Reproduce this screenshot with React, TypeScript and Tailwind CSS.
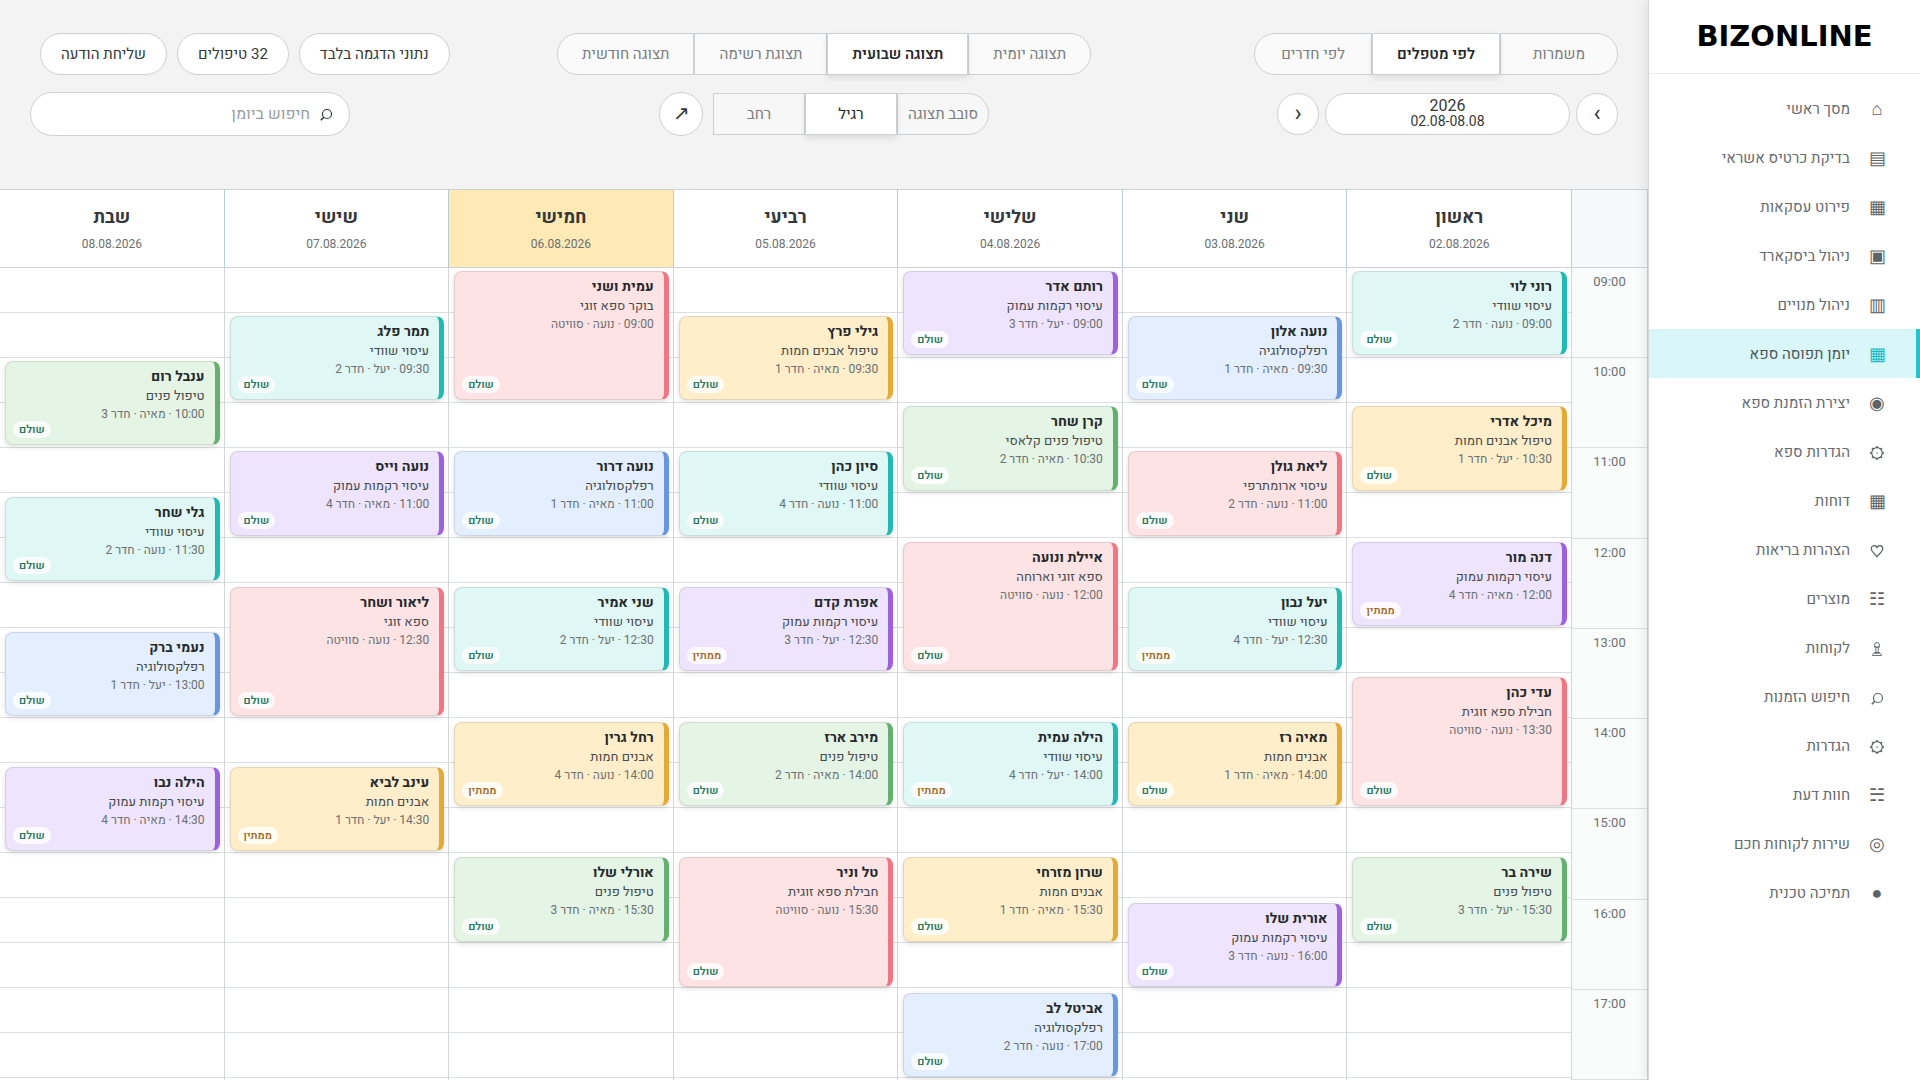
import { useState } from "react";
import clsx from "clsx";

type Tone = "teal" | "yellow" | "purple" | "red" | "blue" | "green";

type Booking = {
  time: string;
  slots: number;
  name: string;
  service: string;
  where: string;
  tone: Tone;
  waiting?: boolean;
};

type Day = { name: string; date: string; today?: boolean; bookings: Booking[] };

const tones: Record<Tone, string> = {
  teal: "bg-[#dff7f5] border-s-[#24b8b3]",
  yellow: "bg-[#ffeec9] border-s-[#e2aa36]",
  purple: "bg-[#efe4fd] border-s-[#9c62dc]",
  red: "bg-[#fee3e4] border-s-[#ed7782]",
  blue: "bg-[#e3efff] border-s-[#6897dc]",
  green: "bg-[#e4f5e6] border-s-[#65b070]",
};

const GearIcon = () => (
  <svg viewBox="0 0 16 16" className="size-4" fill="none" stroke="currentColor">
    <circle cx="8" cy="8" r="5.3" strokeWidth="1.2" />
    <circle cx="8" cy="8" r="0.8" fill="currentColor" stroke="none" />
    <path
      strokeWidth="1.6"
      d="M8 2.7V.9M8 13.3v1.8M2.7 8H.9M13.3 8h1.8M4.2 4.2 3 3M11.8 11.800l1.200 1.200M4.200 11.800 3 13M11.800 4.200 13 3"
    />
  </svg>
);

const HeartIcon = () => (
  <svg viewBox="0 0 16 16" className="size-4" fill="none" stroke="currentColor" strokeWidth="1.2">
    <path d="M8 13.8C6.800 11.300 2.300 9.100 2.300 5.700a2.850 2.850 0 0 1 5.700-.6 2.850 2.850 0 0 1 5.700.6c0 3.400-4.500 5.600-5.700 8.100Z" />
  </svg>
);

const PawnIcon = () => (
  <svg viewBox="0 0 16 16" className="size-4" fill="none" stroke="currentColor" strokeWidth="0.9">
    <circle cx="8" cy="4" r="2.5" />
    <path d="M5 6h6M6.800 6.500v5M9.200 6.500v5M5.200 11.500h5.600M3.500 14.500c0-1.500.6-2 1.700-2.200h5.600c1.100.2 1.700.7 1.700 2.200Z" />
  </svg>
);

const SearchIcon = () => (
  <svg viewBox="0 0 16 16" className="size-4" fill="none" stroke="currentColor">
    <circle cx="9" cy="8" r="4.5" strokeWidth="1.2" />
    <path d="m5.800 11.200-3 3" strokeWidth="1.600" />
  </svg>
);

const navItems = [
  { icon: "⌂", label: "מסך ראשי" },
  { icon: "▤", label: "בדיקת כרטיס אשראי" },
  { icon: "▦", label: "פירוט עסקאות" },
  { icon: "▣", label: "ניהול ביסקארד" },
  { icon: "▥", label: "ניהול מנויים" },
  { icon: "▦", label: "יומן תפוסה ספא", active: true },
  { icon: "◉", label: "יצירת הזמנת ספא" },
  { icon: <GearIcon />, label: "הגדרות ספא" },
  { icon: "▦", label: "דוחות" },
  { icon: <HeartIcon />, label: "הצהרות בריאות" },
  { icon: "☷", label: "מוצרים" },
  { icon: <PawnIcon />, label: "לקוחות" },
  { icon: <SearchIcon />, label: "חיפוש הזמנות" },
  { icon: <GearIcon />, label: "הגדרות" },
  { icon: "☵", label: "חוות דעת" },
  { icon: "◎", label: "שירות לקוחות חכם" },
  { icon: "●", label: "תמיכה טכנית" },
];

const days: Day[] = [
  {
    name: "ראשון",
    date: "02.08.2026",
    bookings: [
      { time: "09:00", slots: 2, name: "רוני לוי", service: "עיסוי שוודי", where: "נועה · חדר 2", tone: "teal" },
      { time: "10:30", slots: 2, name: "מיכל אדרי", service: "טיפול אבנים חמות", where: "יעל · חדר 1", tone: "yellow" },
      { time: "12:00", slots: 2, name: "דנה מור", service: "עיסוי רקמות עמוק", where: "מאיה · חדר 4", tone: "purple", waiting: true },
      { time: "13:30", slots: 3, name: "עדי כהן", service: "חבילת ספא זוגית", where: "נועה · סוויטה", tone: "red" },
      { time: "15:30", slots: 2, name: "שירה בר", service: "טיפול פנים", where: "יעל · חדר 3", tone: "green" },
    ],
  },
  {
    name: "שני",
    date: "03.08.2026",
    bookings: [
      { time: "09:30", slots: 2, name: "נועה אלון", service: "רפלקסולוגיה", where: "מאיה · חדר 1", tone: "blue" },
      { time: "11:00", slots: 2, name: "ליאת גולן", service: "עיסוי ארומתרפי", where: "נועה · חדר 2", tone: "red" },
      { time: "12:30", slots: 2, name: "יעל נבון", service: "עיסוי שוודי", where: "יעל · חדר 4", tone: "teal", waiting: true },
      { time: "14:00", slots: 2, name: "מאיה רז", service: "אבנים חמות", where: "מאיה · חדר 1", tone: "yellow" },
      { time: "16:00", slots: 2, name: "אורית שלו", service: "עיסוי רקמות עמוק", where: "נועה · חדר 3", tone: "purple" },
    ],
  },
  {
    name: "שלישי",
    date: "04.08.2026",
    bookings: [
      { time: "09:00", slots: 2, name: "רותם אדר", service: "עיסוי רקמות עמוק", where: "יעל · חדר 3", tone: "purple" },
      { time: "10:30", slots: 2, name: "קרן שחר", service: "טיפול פנים קלאסי", where: "מאיה · חדר 2", tone: "green" },
      { time: "12:00", slots: 3, name: "איילת ונועה", service: "ספא זוגי וארוחה", where: "נועה · סוויטה", tone: "red" },
      { time: "14:00", slots: 2, name: "הילה עמית", service: "עיסוי שוודי", where: "יעל · חדר 4", tone: "teal", waiting: true },
      { time: "15:30", slots: 2, name: "שרון מזרחי", service: "אבנים חמות", where: "מאיה · חדר 1", tone: "yellow" },
      { time: "17:00", slots: 2, name: "אביטל לב", service: "רפלקסולוגיה", where: "נועה · חדר 2", tone: "blue" },
    ],
  },
  {
    name: "רביעי",
    date: "05.08.2026",
    bookings: [
      { time: "09:30", slots: 2, name: "גילי פרץ", service: "טיפול אבנים חמות", where: "מאיה · חדר 1", tone: "yellow" },
      { time: "11:00", slots: 2, name: "סיון כהן", service: "עיסוי שוודי", where: "נועה · חדר 4", tone: "teal" },
      { time: "12:30", slots: 2, name: "אפרת קדם", service: "עיסוי רקמות עמוק", where: "יעל · חדר 3", tone: "purple", waiting: true },
      { time: "14:00", slots: 2, name: "מירב ארז", service: "טיפול פנים", where: "מאיה · חדר 2", tone: "green" },
      { time: "15:30", slots: 3, name: "טל וניר", service: "חבילת ספא זוגית", where: "נועה · סוויטה", tone: "red" },
    ],
  },
  {
    name: "חמישי",
    date: "06.08.2026",
    today: true,
    bookings: [
      { time: "09:00", slots: 3, name: "עמית ושני", service: "בוקר ספא זוגי", where: "נועה · סוויטה", tone: "red" },
      { time: "11:00", slots: 2, name: "נועה דרור", service: "רפלקסולוגיה", where: "מאיה · חדר 1", tone: "blue" },
      { time: "12:30", slots: 2, name: "שני אמיר", service: "עיסוי שוודי", where: "יעל · חדר 2", tone: "teal" },
      { time: "14:00", slots: 2, name: "רחל גרין", service: "אבנים חמות", where: "נועה · חדר 4", tone: "yellow", waiting: true },
      { time: "15:30", slots: 2, name: "אורלי שלו", service: "טיפול פנים", where: "מאיה · חדר 3", tone: "green" },
    ],
  },
  {
    name: "שישי",
    date: "07.08.2026",
    bookings: [
      { time: "09:30", slots: 2, name: "תמר פלג", service: "עיסוי שוודי", where: "יעל · חדר 2", tone: "teal" },
      { time: "11:00", slots: 2, name: "נועה וייס", service: "עיסוי רקמות עמוק", where: "מאיה · חדר 4", tone: "purple" },
      { time: "12:30", slots: 3, name: "ליאור ושחר", service: "ספא זוגי", where: "נועה · סוויטה", tone: "red" },
      { time: "14:30", slots: 2, name: "עינב לביא", service: "אבנים חמות", where: "יעל · חדר 1", tone: "yellow", waiting: true },
    ],
  },
  {
    name: "שבת",
    date: "08.08.2026",
    bookings: [
      { time: "10:00", slots: 2, name: "ענבל רום", service: "טיפול פנים", where: "מאיה · חדר 3", tone: "green" },
      { time: "11:30", slots: 2, name: "גלי שחר", service: "עיסוי שוודי", where: "נועה · חדר 2", tone: "teal" },
      { time: "13:00", slots: 2, name: "נעמי ברק", service: "רפלקסולוגיה", where: "יעל · חדר 1", tone: "blue" },
      { time: "14:30", slots: 2, name: "הילה נבו", service: "עיסוי רקמות עמוק", where: "מאיה · חדר 4", tone: "purple" },
    ],
  },
];

const hours = ["09:00", "10:00", "11:00", "12:00", "13:00", "14:00", "15:00", "16:00", "17:00"];
const halfHours = Array.from({ length: 18 }, (_, i) => i);

// 09:00 is grid line 1, every half hour is one more
const rowOf = (time: string) => {
  const [h, m] = time.split(":").map(Number);
  return (h - 9) * 2 + m / 30 + 1;
};

const Sidebar = () => (
  <aside className="relative z-10 w-[272px] shrink-0 border-e border-[#d3d7da] bg-white shadow-[0_0_12px_rgba(0,0,0,0.12)]">
    <div
      dir="ltr"
      className="flex h-[74px] items-center justify-center border-b border-[#e8eaeb] font-['DejaVu_Sans',sans-serif] text-[29px] font-bold text-black"
    >
      BIZONLINE
    </div>
    <nav className="pt-2.5">
      {navItems.map((item) => (
        <a
          key={item.label}
          href="#"
          className={clsx(
            "flex h-[49px] items-center gap-[15px] border-s-4 ps-[27px] pt-0.5 text-[15px]",
            item.active ? "border-[#22c3cf] bg-[#d9f6f8] text-[#4a5557]" : "border-transparent text-[#666b6e]"
          )}
        >
          <span
            className={clsx(
              "flex w-6 justify-center text-lg leading-6",
              item.active ? "text-[#16b9c3]" : "text-[#5d6366]"
            )}
          >
            {item.icon}
          </span>
          {item.label}
        </a>
      ))}
    </nav>
  </aside>
);

const segment = "h-[42px] border border-[#cdd1d3] text-[15px] whitespace-nowrap";
const segmentOn = "relative bg-white text-[#25282a] shadow-[0_3px_6px_rgba(0,0,0,0.1)]";

const Segments = (props: { items: string[]; initial: string; className?: string }) => {
  const [selected, setSelected] = useState(props.initial);

  return (
    <div className="flex">
      {props.items.map((item) => (
        <button
          key={item}
          onClick={() => setSelected(item)}
          className={clsx(
            segment,
            props.className,
            "px-6 first:rounded-s-full last:rounded-e-full",
            item === selected ? [segmentOn, "font-semibold"] : "bg-[#fafafa] text-[#797d80]"
          )}
        >
          {item}
        </button>
      ))}
    </div>
  );
};

const WidthSegments = () => (
  <div className="flex">
    <button className={clsx(segment, "w-[92px] rounded-s-full bg-[#f7f7f7] text-[#797d80]")}>סובב תצוגה</button>
    <button className={clsx(segment, segmentOn, "w-[92px]")}>רגיל</button>
    <button className={clsx(segment, "w-[92px] bg-[#f7f7f7] text-[#797d80]")}>רחב</button>
  </div>
);

const pill = "rounded-full border border-[#cdd1d3] bg-white text-[#34383a] whitespace-nowrap";

const Toolbar = () => (
  <header className="grid h-[189px] grid-cols-[1fr_auto_1fr] content-start px-[30px] pt-[33px]">
    <div className="flex flex-col items-start gap-[18px]">
      <Segments items={["משמרות", "לפי מטפלים", "לפי חדרים"]} initial="לפי מטפלים" className="min-w-[118px]" />
      <div className="flex gap-1.5">
        <button className={clsx(pill, "size-[42px] text-2xl")}>›</button>
        <button className={clsx(pill, "flex h-[42px] w-[245px] flex-col items-center justify-center text-sm leading-4")}>
          <span className="text-base leading-4">2026</span>
          <span dir="ltr">02.08-08.08</span>
        </button>
        <button className={clsx(pill, "size-[42px] text-2xl")}>‹</button>
      </div>
    </div>

    <div className="flex flex-col items-center gap-[17px]">
      <Segments
        items={["תצוגה יומית", "תצוגה שבועית", "תצוגת רשימה", "תצוגה חודשית"]}
        initial="תצוגה שבועית"
      />
      <div className="flex items-center gap-2.5">
        <WidthSegments />
        <button className={clsx(pill, "size-11 text-xl")}>↗</button>
      </div>
    </div>

    <div className="flex flex-col items-end gap-[17px]">
      <div className="flex gap-2.5 pe-2.5 text-[15px]">
        <button className={clsx(pill, "h-[42px] px-5")}>נתוני הדגמה בלבד</button>
        <button className={clsx(pill, "h-[42px] px-5")}>32 טיפולים</button>
        <button className={clsx(pill, "h-[42px] px-5")}>שליחת הודעה</button>
      </div>
      <label className={clsx(pill, "flex h-11 w-80 items-center gap-2 ps-[15px]")}>
        <SearchIcon />
        <input
          type="search"
          placeholder="חיפוש ביומן"
          className="min-w-0 flex-1 text-base outline-none placeholder:text-[#9a9d9f]"
        />
      </label>
    </div>
  </header>
);

const BookingCard = (props: { booking: Booking }) => {
  const { booking } = props;

  return (
    <article
      style={{ gridRow: `${rowOf(booking.time)} / span ${booking.slots}` }}
      className={clsx(
        "relative my-[3px] ms-1 me-[5px] rounded-lg border border-s-[5px] border-black/10 px-2.5 pt-[5px] shadow-[0_2px_5px_rgba(0,0,0,0.12)]",
        tones[booking.tone]
      )}
    >
      <h3 className="text-sm leading-5 font-bold text-[#25292c]">{booking.name}</h3>
      <p className="text-[13px] leading-[18px] text-[#454a4d]">{booking.service}</p>
      <p className="text-xs leading-[18px] text-[#6b7073]">
        {booking.time} · {booking.where}
      </p>
      <span
        className={clsx(
          "absolute end-[7px] bottom-1.5 rounded-full bg-white/80 px-1.5 text-[11px] leading-[17px] font-semibold",
          booking.waiting ? "text-[#a3691a]" : "text-[#267a63]"
        )}
      >
        {booking.waiting ? "ממתין" : "שולם"}
      </span>
    </article>
  );
};

const columns = "grid grid-cols-[76px_repeat(7,minmax(0,1fr))]";

const Calendar = () => (
  <section className="-me-px flex flex-1 flex-col border-s border-t border-[#cdd1d3] bg-white">
    <div className={clsx(columns, "h-[78px] border-b border-[#cdd1d3]")}>
      <div className="border-e border-[#b9ced3] bg-[#f7f8fa]" />
      {days.map((day) => (
        <div
          key={day.date}
          className={clsx(
            "flex flex-col items-center border-e border-[#b9ced3] pt-3.5",
            day.today && "bg-[#ffeab6]"
          )}
        >
          <h2 className="text-lg leading-7 font-bold text-[#34383b]">{day.name}</h2>
          <p className="pt-0.5 text-xs leading-5 text-[#6b7073]">{day.date}</p>
        </div>
      ))}
    </div>

    <div className={clsx(columns, "flex-1")}>
      <div className="grid auto-rows-fr border-e border-[#d3d6d9] bg-[#fafcfb]">
        {hours.map((hour) => (
          <div key={hour} className="border-b border-[#dcdfe1] pt-1 text-center text-[13px] leading-5 text-[#6b7073]">
            {hour}
          </div>
        ))}
      </div>
      {days.map((day) => (
        <div key={day.date} className="relative border-e border-[#d3d6d9]">
          {halfHours.map((slot) => (
            <div key={slot} className="h-[45px] border-b border-[#dcdfe1]" />
          ))}
          <div className="absolute inset-0 grid grid-rows-[repeat(18,minmax(0,1fr))]">
            {day.bookings.map((booking) => (
              <BookingCard key={booking.time} booking={booking} />
            ))}
          </div>
        </div>
      ))}
    </div>
  </section>
);

const App = () => (
  <div dir="rtl" className="flex min-h-screen overflow-hidden bg-[#f3f3f3] font-['Heebo','Noto_Sans',sans-serif]">
    <Sidebar />
    <main className="flex min-w-0 flex-1 flex-col">
      <Toolbar />
      <Calendar />
    </main>
  </div>
);

export default App;
